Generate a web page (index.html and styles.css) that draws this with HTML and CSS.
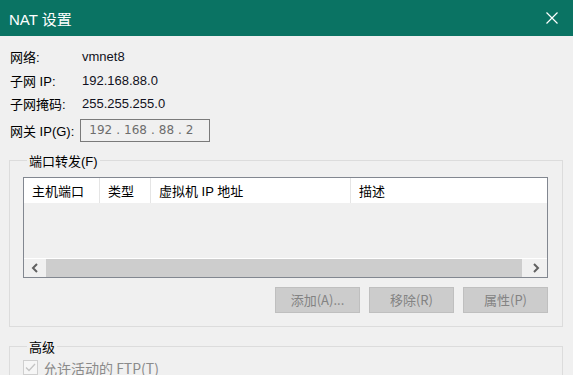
FILE: index.html
```html
<!DOCTYPE html>
<html lang="zh-CN">
<head>
  <meta charset="UTF-8">
  <title>NAT 设置</title>
  <link rel="stylesheet" href="styles.css">
</head>
<body>
  <div class="dialog">
    <div class="titlebar">
      <span class="title">NAT 设置</span>
      <svg class="close" width="12" height="12" viewBox="0 0 12 12">
        <path d="M0.5 0.5 L11.5 11.5 M11.5 0.5 L0.5 11.5" stroke="#fff" stroke-width="1.2" fill="none"/>
      </svg>
    </div>

    <div class="content">
      <div class="info">
        <span class="label">网络:</span><span class="value">vmnet8</span>
        <span class="label">子网 IP:</span><span class="value">192.168.88.0</span>
        <span class="label">子网掩码:</span><span class="value">255.255.255.0</span>
      </div>

      <div class="gateway">
        <span class="label">网关 IP(G):</span>
        <div class="ip-box">
          <span>192</span><span class="dot">.</span><span>168</span><span class="dot">.</span><span>88</span><span class="dot">.</span><span>2</span>
        </div>
      </div>

      <fieldset class="group forward">
        <legend>端口转发(F)</legend>
        <div class="list">
          <div class="list-head">
            <span class="col col-port">主机端口</span>
            <span class="col col-type">类型</span>
            <span class="col col-ip">虚拟机 IP 地址</span>
            <span class="col col-desc">描述</span>
          </div>
          <div class="list-body"></div>
          <div class="hscroll">
            <span class="arrow">
              <svg width="8" height="10" viewBox="0 0 8 10"><path d="M6 1 L2 5 L6 9" stroke="#606060" stroke-width="2" fill="none"/></svg>
            </span>
            <span class="thumb"></span>
            <span class="arrow">
              <svg width="8" height="10" viewBox="0 0 8 10"><path d="M2 1 L6 5 L2 9" stroke="#606060" stroke-width="2" fill="none"/></svg>
            </span>
          </div>
        </div>
        <div class="buttons">
          <button class="btn btn-add">添加(A)...</button>
          <button class="btn">移除(R)</button>
          <button class="btn">属性(P)</button>
        </div>
      </fieldset>

      <fieldset class="group advanced">
        <legend>高级</legend>
        <label class="check">
          <span class="box">
            <svg width="11" height="9" viewBox="0 0 11 9"><path d="M1 4.5 L4 7.5 L10 1" stroke="#c4c4c4" stroke-width="1.3" fill="none"/></svg>
          </span>
          允许活动的 FTP(T)
        </label>
      </fieldset>
    </div>
  </div>
</body>
</html>
```

FILE: styles.css
```css
body {
  margin: 0;
  background-color: #f0f0f0;
  font-family: "Liberation Sans", "Noto Sans CJK SC", sans-serif;
  font-size: 12px;
  color: #000;
  overflow: hidden;
}
.dialog {
  width: 573px;
  height: 375px;
  overflow: hidden;
}
.titlebar {
  height: 36px;
  background-color: #0a7363;
  color: #fff;
  display: flex;
  align-items: center;
  justify-content: space-between;
  padding: 0 15px 0 9px;
}
.title {
  font-size: 15px;
}
.content {
  padding: 0 10px 0 9px;
}
.label {
  font-size: 13px;
}
.info {
  display: grid;
  grid-template-columns: 72px auto;
  grid-auto-rows: 23.5px;
  align-items: center;
  padding: 9px 0 0 1px;
}
.value {
  font-size: 13px;
  color: #101020;
}
.gateway {
  display: flex;
  align-items: center;
  gap: 6px;
  margin-top: 3px;
  padding-left: 1px;
}
.ip-box {
  width: 130px;
  height: 23px;
  border: 1px solid #7a7a7a;
  display: flex;
  align-items: center;
  padding-left: 8px;
  color: #6d6d6d;
  font-family: "DejaVu Sans", sans-serif;
  font-size: 12px;
  box-sizing: border-box;
}
.ip-box .dot {
  padding: 0 4px;
}
.group {
  margin: 0;
  border: 1px solid #dcdcdc;
  padding: 0 14px 0 13px;
}
.group legend {
  font-size: 13px;
  padding: 0 2px;
  margin-left: 4px;
}
.forward {
  margin-top: 9px;
  height: 176px;
  box-sizing: border-box;
}
.list {
  margin-top: 7px;
  border: 1px solid #828790;
  height: 99px;
  display: flex;
  flex-direction: column;
}
.list-head {
  display: flex;
  background-color: #fff;
  height: 25px;
  font-size: 13px;
}
.col {
  display: flex;
  align-items: center;
  padding-left: 8px;
  border-right: 1px solid #e5e5e5;
}
.col-port { width: 67px; }
.col-type { width: 42px; }
.col-ip { width: 191px; }
.col-desc { flex: 1; border-right: none; }
.list-body {
  flex: 1;
  background-color: #f0f0f0;
  border-bottom: 1px solid #fff;
}
.hscroll {
  display: flex;
  height: 18px;
  background-color: #f0f0f0;
}
.arrow {
  width: 22px;
  display: flex;
  align-items: center;
  justify-content: center;
}
.thumb {
  flex: 1;
  background-color: #cdcdcd;
  margin-right: 3px;
}
.buttons {
  display: flex;
  justify-content: flex-end;
  gap: 9px;
  margin-top: 9px;
}
.btn {
  width: 85px;
  height: 26px;
  background-color: #cccccc;
  border: 1px solid #bfbfbf;
  color: #838383;
  font-family: "Noto Sans CJK SC", sans-serif;
  font-size: 13px;
  padding: 0;
}
.advanced {
  margin-top: 10px;
  height: 60px;
}
.check {
  display: flex;
  align-items: center;
  gap: 5px;
  margin-top: 2px;
  color: #8b8b8b;
  font-family: "Noto Sans CJK SC", sans-serif;
  font-size: 14px;
}
.box {
  width: 13px;
  height: 13px;
  border: 1px solid #cfcfcf;
  background-color: #f6f6f6;
  display: flex;
  align-items: center;
  justify-content: center;
}
```
